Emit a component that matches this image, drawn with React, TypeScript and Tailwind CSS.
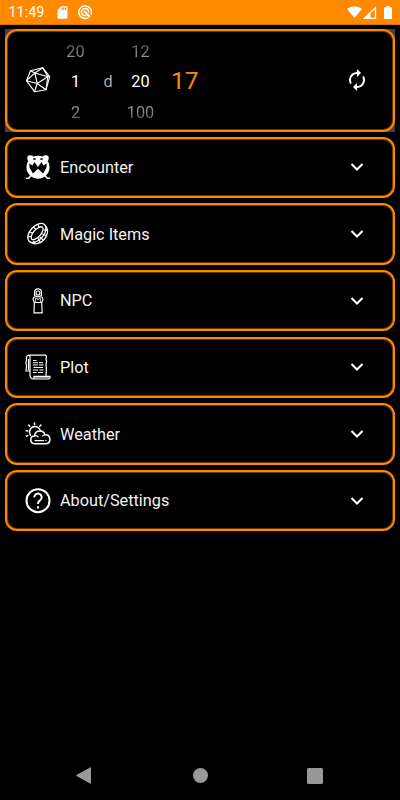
import type { ReactNode } from "react";
import { MdAutorenew, MdSdCard } from "react-icons/md";

function DiceIcon() {
  return (
    <svg viewBox="0 0 26 26" className="size-[26px]" fill="none" stroke="#fff" strokeWidth="1.150" strokeLinejoin="round">
      <path d="M1.500 13.700 5.500 3.700 17.800 .8 24.700 9.700 21 22.700 9.500 24.700Z" />
      <path d="M9.800 6 22.800 9.700 12.200 16.500Z" />
      <path d="M5.500 3.700 9.800 6 17.800 .8 22.800 9.700 24.700 9.700M22.800 9.700 21 22.700 12.200 16.500 9.500 24.700M12.200 16.500 1.500 13.700 9.800 6" />
    </svg>
  );
}

function MonsterIcon() {
  return (
    <svg viewBox="0 0 26 26" className="size-[26px]">
      <circle cx="13" cy="13.200" r="11.500" fill="#fff" />
      <path
        fill="#fff"
        d="M2.800 1.800Q5.500 .5 8.500 2.300L5 7.500 2.900 7Q1.500 4 2.800 1.800ZM23.200 1.800Q20.500 .5 17.500 2.300L21 7.500 23.100 7Q24.500 4 23.200 1.800Z"
      />
      <path fill="none" stroke="#fff" strokeWidth="1.500" d="M6 21.500 3.800 24.300H.8M20 21.500 22.200 24.300H25.200" />
      <path fill="#000" d="M4.200 9.500 7.500 11.500 9.500 8 13 13 16.500 8 18.500 11.500 21.800 9.500 21.300 14 18 19.500 13 14.800 8 19.500 4.700 14Z" />
      <path fill="#000" d="M8.200 4.300h2.500v1.500H8.200zM15.300 4.300h2.500v1.500h-2.500z" />
    </svg>
  );
}

function RingIcon() {
  return (
    <svg viewBox="0 0 26 26" className="size-[26px]" fill="none" stroke="#fff">
      <g transform="rotate(-48 13 13)">
        <ellipse cx="13" cy="11.500" rx="11.300" ry="6.800" strokeWidth="1.300" />
        <ellipse cx="13" cy="11.800" rx="8" ry="3.600" strokeWidth="1.300" />
        <path strokeWidth="1.300" d="M1.800 12.500C2.500 19 8.500 21.300 13 21.300S23.500 19 24.200 12.500" />
        <path strokeWidth="1.200" d="M4.500 7.500 6.500 9.500M9 5.500 10 8.500M15 5 15 8.200M20 7 18.500 9.500M5 14 3.500 17M10 15.500 8.500 20M12 16V21M16 16 17.500 20.500M20 14.500 22 17.500" />
      </g>
    </svg>
  );
}

function NpcIcon() {
  return (
    <svg viewBox="0 0 26 26" className="size-[26px]" fill="none" stroke="#fff" strokeWidth="1.150">
      <path d="M9.500 7.500V4.500Q9.500 .8 13 .8T16.500 4.500V7.500Q13 10 9.500 7.500Z" />
      <circle cx="13" cy="5" r="2" />
      <path d="M10 8.800Q8 9.200 8 11.500L9.300 14.500H16.700L18 11.500Q18 9.200 16 8.800" />
      <path d="M10.500 9.500 13 11.500 15.500 9.500M10.500 10V14M15.500 10V14" opacity=".7" />
      <path d="M9.300 14.500 9 24.900H17.200L16.700 14.500" />
    </svg>
  );
}

function ScrollIcon() {
  return (
    <svg viewBox="0 0 26 26" className="size-[26px]" fill="none" stroke="#fff" strokeWidth="1.200">
      <path d="M4 1.200H20Q22.300 1.500 21 4.500L21.600 8 21 10.500 21.400 14 21 22M4 1.200Q5.500 2 5 5V21.500Q5.500 25 8 25H23.500Q25.300 25 25 22.300H9Q9 25 8 25" />
      <path d="M4 1.200Q1 1.500 1.500 5L1 9 1.500 12 1 17H5M3.500 5V16" />
      <path strokeWidth="1.100" d="M8 6.500H11.500M8 8.700H13M14 8.700H18M8 11H13M14 11H18.500M8.500 13.500H18M8 16H13M14.500 16H18.500M8 18.500H11.500M13 18.500H18" />
      <path strokeWidth="1.300" opacity=".6" d="M9 23.700H24" />
    </svg>
  );
}

function WeatherIcon() {
  return (
    <svg viewBox="0 0 26 26" className="size-[26px]" fill="none" stroke="#fff" strokeWidth="1.500" strokeLinecap="round">
      <path d="M5.600 14.500A5.600 5.600 0 1 1 15.500 9.800" />
      <path d="M9.500 3.500V2M4.800 5.200 3.700 4.100M14.700 5.200 15.900 4.100M2.600 10 1.200 9.700M2.800 14.600 1.500 15.200" />
      <path d="M9.500 22.800Q5.800 22.500 5.800 18.800T9.500 15Q10 10 14.800 10Q18.800 10 20 13.700Q24.900 13.800 24.900 18.200T20.500 22.800Z" />
      <path d="M9.700 14.800Q12 14.300 13 16M19.800 13.800Q18.300 14 17.600 15" strokeWidth="1.200" />
      <path d="M10 19.600H18.500M20.800 19.600H21" strokeWidth="1.300" />
    </svg>
  );
}

function HelpIcon() {
  return (
    <svg viewBox="0 0 26 26" className="size-[26px]" fill="none" stroke="#fff" strokeWidth="2">
      <circle cx="13" cy="12.700" r="11.500" />
      <path d="M9.300 9.400A3.700 3.700 0 1 1 15 12.400Q13 13.600 13 16" />
      <path d="M13 18.300V20.400" />
    </svg>
  );
}

function ChevronIcon() {
  return (
    <svg viewBox="0 0 14 10" className="h-[10px] w-[14px]" fill="none" stroke="#fff" strokeWidth="2.100">
      <path d="M1.500 2 7 7.500 12.500 2" />
    </svg>
  );
}

const sections: { label: string; icon: ReactNode }[] = [
  { label: "Encounter", icon: <MonsterIcon /> },
  { label: "Magic Items", icon: <RingIcon /> },
  { label: "NPC", icon: <NpcIcon /> },
  { label: "Plot", icon: <ScrollIcon /> },
  { label: "Weather", icon: <WeatherIcon /> },
  { label: "About/Settings", icon: <HelpIcon /> },
];

function StatusBar() {
  return (
    <header className="flex h-[25px] shrink-0 items-center border-b border-[#d87400] bg-[#ff8a00] pr-[8px] pl-[8.500px] text-white">
      <span className="w-[36px] pt-[3px] text-[14.400px] leading-none">11:49</span>
      <MdSdCard className="ml-[10.500px] size-[15px]" />
      <svg viewBox="0 0 16 16" className="ml-[7px] size-[16px]" fill="none" stroke="#fff" strokeWidth="1.500">
        <path d="M11.500 13.500A6.300 6.300 0 1 1 14 10.500" />
        <path d="M9.500 11.300A3.600 3.600 0 1 1 11.600 8.500" />
        <path d="M7 7 13 12.800" strokeWidth="2" />
      </svg>
      <svg viewBox="0 0 16 12" className="ml-auto h-[12px] w-[15px]" preserveAspectRatio="none" fill="#fff">
        <path d="M0 2.800Q8-2.500 16 2.800L8 12Z" />
      </svg>
      <svg viewBox="0 0 14 13" className="ml-[1px] h-[13px] w-[14px]" fill="none" stroke="#fff" strokeWidth="1.300">
        <path d="M1.500 12.300H12.500V1.800Z" />
        <path fill="#fff" stroke="none" d="M1 12.500 7.500 6V12.500Z" />
      </svg>
      <svg viewBox="0 0 8 13" className="ml-[7px] h-[13px] w-[8px]" fill="#fff">
        <path d="M2.500 0h3v1.300H7.200q.8 0 .8.800V12.200q0 .8-.8.800H.8q-.8 0-.8-.8V2.100q0-.8.800-.8H2.500z" />
      </svg>
    </header>
  );
}

function Wheel({ values, className }: { values: string[]; className: string }) {
  return (
    <div className={`flex flex-col pt-[4px] text-center text-[16.250px] leading-[30.400px] ${className}`}>
      <span className="bg-linear-to-b from-[#5a5a5a] from-25% to-[#a0a0a0] to-75% bg-clip-text text-transparent">{values[0]}</span>
      <span className="text-white">{values[1]}</span>
      <span className="bg-linear-to-b from-[#a0a0a0] from-25% to-[#5a5a5a] to-75% bg-clip-text text-transparent">{values[2]}</span>
    </div>
  );
}

function DiceRoller() {
  return (
    <div className="-mb-[0.330px] h-[102.670px] shrink-0 bg-[linear-gradient(to_right,#424242_9px,#000_9px,#000_381px,#424242_381px)]">
      <div className="flex h-full items-center rounded-[12px] border-[2.500px] border-[#ff8a00] bg-black pl-[17.500px] ring-1 ring-[#ff8a00]/40 ring-inset">
        <DiceIcon />
        <Wheel values={["20", "1", "2"]} className="ml-[7px] w-[36px]" />
        <span className="ml-[10px] w-[10px] pt-[3px] text-[16.250px] text-[#aaa]">d</span>
        <Wheel values={["12", "20", "100"]} className="ml-[9px] w-[36px]" />
        <span className="ml-[12.500px] pt-[3px] text-[24.500px] text-[#ff8a00]">17</span>
        <MdAutorenew className="mr-[24px] ml-auto size-[24px] text-white" />
      </div>
    </div>
  );
}

function SectionCard({ label, icon }: { label: string; icon: ReactNode }) {
  return (
    <button
      type="button"
      className="flex h-[61.330px] shrink-0 items-center rounded-[12px] border-[2.500px] border-[#ff8a00] pl-[17.500px] text-left ring-1 ring-[#ff8a00]/40 ring-inset"
    >
      {icon}
      <span className="ml-[9.500px] pt-[1.500px] text-[16.250px] text-[#f2f2f2]">{label}</span>
      <span className="mr-[29px] ml-auto">
        <ChevronIcon />
      </span>
    </button>
  );
}

export default function App() {
  return (
    <div className="flex h-screen w-full flex-col bg-black font-['Roboto',sans-serif]">
      <StatusBar />
      <main className="flex flex-1 flex-col gap-[5.330px] px-[5px] pt-[4px]">
        <DiceRoller />
        {sections.map((section) => (
          <SectionCard key={section.label} {...section} />
        ))}
      </main>
      <nav className="flex h-[49px] shrink-0 items-center pl-[76px]">
        <svg viewBox="0 0 15 17" className="h-[17px] w-[15px]" fill="#999">
          <path d="M14 .4Q15 0 15 1V16Q15 17 14 16.600L.5 9Q0 8.500.5 8Z" />
        </svg>
        <span className="ml-[101.500px] size-[15px] rounded-full bg-[#999]" />
        <span className="ml-[99px] size-[16px] rounded-[1.500px] bg-[#999]" />
      </nav>
    </div>
  );
}
